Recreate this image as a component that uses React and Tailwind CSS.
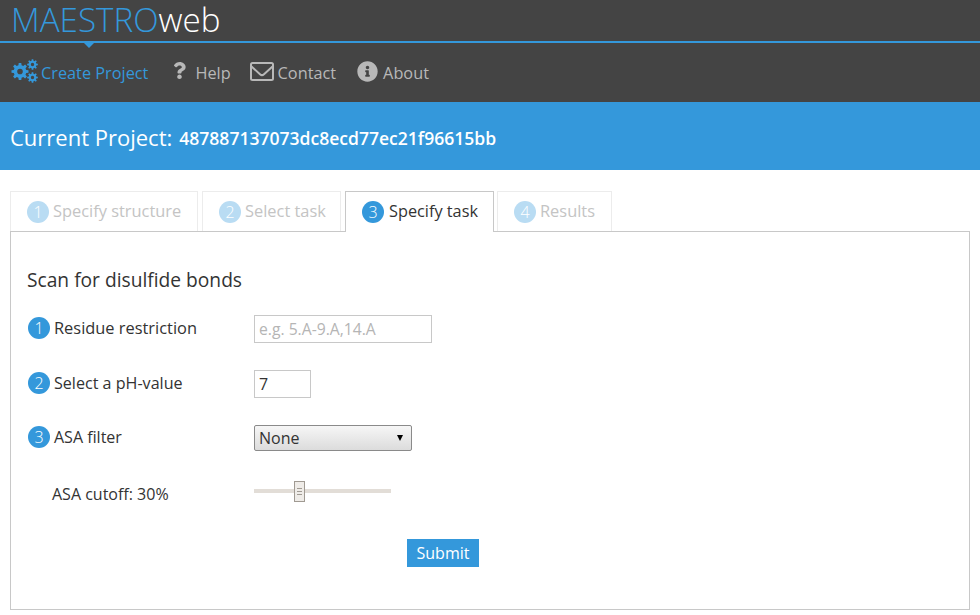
import React from "react";
import { FaQuestion, FaInfoCircle } from "react-icons/fa";

const gear = (cx, cy, rOuter, rInner, rHole, teeth) => {
  let d = "";
  for (let i = 0; i < teeth; i++) {
    const step = (Math.PI * 2) / teeth;
    const a = i * step - Math.PI / 2;
    const pts = [
      [rInner, a - step * 0.32],
      [rOuter, a - step * 0.19],
      [rOuter, a + step * 0.19],
      [rInner, a + step * 0.32],
    ];
    pts.forEach(([r, t], j) => {
      const cmd = i === 0 && j === 0 ? "M" : "L";
      d += `${cmd}${(cx + r * Math.cos(t)).toFixed(2)} ${(cy + r * Math.sin(t)).toFixed(2)}`;
    });
  }
  d += `Z M${cx - rHole} ${cy}a${rHole} ${rHole} 0 1 0 ${rHole * 2} 0a${rHole} ${rHole} 0 1 0 ${-rHole * 2} 0Z`;
  return d;
};

const Num = ({ n, faded }) => (
  <span className={`flex h-[22px] w-[22px] shrink-0 items-center justify-center rounded-full text-[16px] font-light text-white ${faded ? "bg-[#b9dcf3]" : "bg-[#3498db]"}`}>{n}</span>
);

const Tab = ({ n, label, active, w }) => (
  <div className={`flex items-center border border-b-0 pl-[16px] ${w} ${active ? "relative z-10 -mb-px h-[41px] gap-[5px] border-[#c8c8c8] bg-white pb-px text-[#333]" : "h-[40px] gap-[4px] border-[#ececec] text-[#c4c4c4]"}`}>
    <Num n={n} faded={!active} />
    <span className={active ? "text-[16.3px]" : "text-[16.4px]"}>{label}</span>
  </div>
);

const Row = ({ n, label, children, h, size }) => (
  <div className={`flex items-center ${h}`}>
    <div className="mb-[2px] flex w-[227px] items-center gap-[4px] pl-[1px]">
      <Num n={n} />
      <span className={`text-[#333] ${size}`}>{label}</span>
    </div>
    {children}
  </div>
);

export default function App() {
  return (
    <div className="h-[615px] w-[980px] overflow-hidden bg-white font-['Open_Sans',sans-serif]">
      <header className="bg-[#444444]">
        <div className="flex h-[41px] items-center pb-[2px] pl-[11px] text-[33.2px] font-light leading-[36px]">
          <span className="text-[#3498db]">MAESTRO</span>
          <span className="text-white">web</span>
        </div>
        <div className="relative h-[2px] bg-[#3498db]">
          <span className="absolute left-[84px] top-[2px] h-0 w-0 border-x-[5px] border-t-[5px] border-x-transparent border-t-[#3498db]" />
        </div>
        <nav className="flex h-[59px] items-center pl-[12px] pt-[2px] text-[16.3px] text-[#b8b8b8]">
          <div className="flex items-center gap-[3px] text-[#3498db]">
            <svg width="26" height="24" viewBox="0 0 26 24" fill="currentColor" fillRule="evenodd" aria-hidden="true" className="mb-[1px] overflow-visible">
              <path d={gear(8, 10.5, 8.6, 6.4, 2.8, 8)} />
              <path d={gear(20.5, 3.5, 5.4, 3.9, 1.7, 8)} />
              <path d={gear(20.5, 16.5, 5.4, 3.9, 1.7, 8)} />
            </svg>
            <span>Create Project</span>
          </div>
          <div className="ml-[23px] flex items-center gap-[7px]">
            <FaQuestion size={17} className="mb-[6px]" />
            <span>Help</span>
          </div>
          <div className="ml-[19px] flex items-center gap-[4px]">
            <svg width="24" height="19" viewBox="0 0 24 19" fill="none" stroke="currentColor" aria-hidden="true" className="mb-[4px]">
              <rect x="1" y="1" width="22" height="17" rx="1.5" strokeWidth="2" />
              <path d="M1.5 4.5 L10 12.2 Q12 14 14 12.2 L22.5 4.5" strokeWidth="2" />
            </svg>
            <span>Contact</span>
          </div>
          <div className="ml-[21px] flex items-center gap-[5px]">
            <FaInfoCircle size={21} className="mb-[5px]" />
            <span>About</span>
          </div>
        </nav>
      </header>
      <div className="flex h-[68px] items-center bg-[#3498db] pl-[10px] pt-[2px] text-white">
        <span className="text-[22px]">Current Project:</span>
        <span className="ml-[7px] mt-[2px] text-[17.55px] font-semibold">487887137073dc8ecd77ec21f96615bb</span>
      </div>
      <main className="px-[10px] pt-[21px]">
        <div className="flex items-end">
          <Tab n="1" label="Specify structure" w="w-[188px]" />
          <div className="w-[4px]" />
          <Tab n="2" label="Select task" w="w-[139px]" />
          <div className="w-[4px]" />
          <Tab n="3" label="Specify task" active w="w-[149px]" />
          <div className="w-[3px]" />
          <Tab n="4" label="Results" w="w-[115px]" />
        </div>
        <section className="h-[379px] border border-[#c8c8c8] pl-[16px] pt-[36px]">
          <h2 className="text-[19.2px] leading-[24px] text-[#333]">Scan for disulfide bonds</h2>
          <div className="mt-[23px]">
            <Row n="1" label="Residue restriction" h="h-[28px]" size="text-[16.4px]">
              <input readOnly placeholder="e.g. 5.A-9.A,14.A" className="h-[28px] w-[178px] border border-[#c8c8c8] px-[4px] text-[15.7px] text-[#333] placeholder:text-[#b5b5b5] outline-none" />
            </Row>
            <Row n="2" label="Select a pH-value" h="mt-[27px] h-[28px]" size="text-[16.1px]">
              <input readOnly value="7" className="h-[28px] w-[57px] border border-[#c8c8c8] px-[4px] text-[16px] text-[#333] outline-none" />
            </Row>
            <Row n="3" label="ASA filter" h="mt-[27px] h-[26px]" size="text-[16px]">
              <div className="flex h-[26px] w-[158px] items-center justify-between rounded-[2px] border border-[#8a8a8a] bg-gradient-to-b from-[#f6f6f6] to-[#dcdcdc] pl-[4px] pr-[8px] text-[16px] text-[#333]">
                <span>None</span>
                <span className="h-0 w-0 border-x-[3px] border-t-[6px] border-x-transparent border-t-black" />
              </div>
            </Row>
            <div className="mt-[30px] flex h-[26px] items-center">
              <span className="w-[227px] pl-[25px] text-[16px] text-[#333]">ASA cutoff: 30%</span>
              <div className="relative mb-[6px] h-[4px] w-[137px] bg-[#e2ddd7]">
                <div className="absolute left-[40px] top-[-8px] flex h-[21px] w-[11px] flex-col items-center justify-center gap-[2px] border border-[#a09a92] bg-[#efece8]">
                  <span className="h-px w-[5px] bg-[#a09a92]" />
                  <span className="h-px w-[5px] bg-[#a09a92]" />
                  <span className="h-px w-[5px] bg-[#a09a92]" />
                </div>
              </div>
            </div>
            <div className="mt-[32px] flex pl-[380px]">
              <button className="h-[28px] w-[72px] bg-[#3498db] text-[16px] text-white">Submit</button>
            </div>
          </div>
        </section>
      </main>
    </div>
  );
}
